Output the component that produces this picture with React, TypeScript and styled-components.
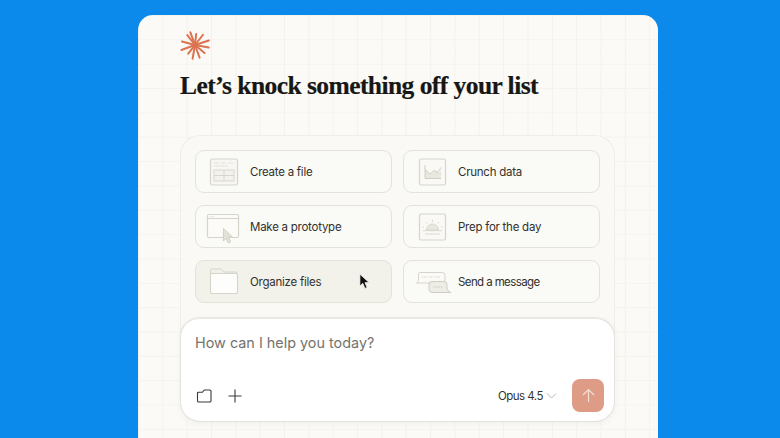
import React from 'react'
import styled, { createGlobalStyle } from 'styled-components'

const GlobalStyle = createGlobalStyle`
  html, body {
    margin: 0;
    height: 100%;
    overflow: hidden;
    background: #0b8aeb;
    font-family: Inter, "Liberation Sans", sans-serif;
  }
`

const Page = styled.div`
  width: 780px;
  height: 438px;
  padding: 15px 0 0 138px;
  box-sizing: border-box;
  overflow: hidden;
`

const Sheet = styled.main`
  width: 520px;
  height: 423px;
  box-sizing: border-box;
  padding: 14px 43px 0 42px;
  border-radius: 15px 15px 0 0;
  background-color: #fbfaf6;
  background-image:
    linear-gradient(to right, #f3f2ec 1px, transparent 1px),
    linear-gradient(to bottom, #f4f3ed 1px, transparent 1px);
  background-size: 24.35px 24.35px;
  background-position: 0 0;
`

const Logo = styled.svg`
  display: block;
  width: 32px;
  height: 32px;
  margin-left: -1px;
`

const Heading = styled.h1`
  margin: 10px 0 0;
  font-family: "Liberation Serif", serif;
  font-size: 25.5px;
  line-height: 30px;
  font-weight: 700;
  letter-spacing: -0.56px;
  color: #171715;
  white-space: nowrap;
  -webkit-text-stroke: 0.2px #171715;
`

const Options = styled.section`
  margin-top: 34px;
  padding: 14px 14px 34px;
  display: grid;
  grid-template-columns: 197px 197px;
  justify-content: space-between;
  gap: 12px 0;
  background: #faf9f5;
  border: 1px solid #efeee8;
  border-bottom: 0;
  border-radius: 20px 20px 0 0;
`

const Option = styled.button<{ $active?: boolean; $tight?: boolean }>`
  position: relative;
  height: 43px;
  padding: 0 0 0 9px;
  display: flex;
  align-items: center;
  gap: 5px;
  font-family: Inter, "Liberation Sans", sans-serif;
  font-size: 11.5px;
  letter-spacing: ${p => (p.$tight ? '-0.6px' : '-0.25px')};
  color: #31312e;
  background: ${p => (p.$active ? '#f3f2ea' : '#fafaf6')};
  border: 1px solid #e4e2da;
  border-radius: 9px;
  box-sizing: border-box;
`

const OptionIcon = styled.svg`
  width: 40px;
  height: 40px;
  flex: none;
`

const Pointer = styled.svg`
  position: absolute;
  left: 163px;
  top: 12px;
  width: 11px;
  height: 17px;
`

const Composer = styled.section`
  height: 105px;
  margin-top: -20px;
  position: relative;
  box-sizing: border-box;
  padding: 14px 10px 9px 14px;
  display: flex;
  flex-direction: column;
  justify-content: space-between;
  background: #fff;
  border: 1px solid #e3e2dd;
  border-top: 2px solid #e9e8e3;
  border-radius: 20px;
  box-shadow: 0 2px 6px rgba(60, 50, 30, 0.05);
`

const Placeholder = styled.div`
  font-size: 14.4px;
  line-height: 20px;
  color: #74736e;
`

const Toolbar = styled.div`
  display: flex;
  align-items: center;
`

const ToolIcon = styled.svg`
  width: 18px;
  height: 18px;
  flex: none;
`

const AddIcon = styled(ToolIcon)`
  margin-left: 13px;
`

const ModelPicker = styled.div`
  margin-left: auto;
  display: flex;
  align-items: center;
  gap: 3px;
  font-size: 11.5px;
  letter-spacing: -0.5px;
  color: #34342f;
`

const Chevron = styled.svg`
  width: 11px;
  height: 11px;
`

const SendButton = styled.button`
  width: 32px;
  height: 33px;
  margin-left: 15px;
  padding: 0;
  display: flex;
  align-items: center;
  justify-content: center;
  background: #de9c87;
  border: 0;
  border-radius: 8px;
`

const SendIcon = styled.svg`
  width: 15px;
  height: 15px;
`

const rays = [
  [-20, 13.5], [6, 11], [38, 13], [72, 14.5], [100, 14], [130, 12.5],
  [160, 13.5], [190, 14], [218, 11], [250, 14.5], [285, 13.5], [322, 12.5],
]

const Spark = () => (
  <Logo viewBox="0 0 32 32">
    {rays.map(([angle, len]) => {
      const r = (angle * Math.PI) / 180
      return (
        <line
          key={angle}
          x1="16"
          y1="16"
          x2={16 + Math.sin(r) * len}
          y2={16 - Math.cos(r) * len}
          stroke="#db7350"
          strokeWidth="2"
          strokeLinecap="round"
        />
      )
    })}
  </Logo>
)

const line = '#d6d4cb'
const fillSoft = '#e9e8df'

const FileIcon = () => (
  <OptionIcon viewBox="0 0 40 40" fill="none">
    <rect x="5.5" y="7" width="27" height="26" rx="1.5" fill="#f8f7f3" stroke={line} strokeWidth="1.2" />
    <path d="M9 11h5M16 11h5M23 11h5M9 14h14" stroke={line} strokeWidth=".8" strokeDasharray="1.5 .6" />
    <rect x="9" y="18" width="20" height="11" fill="#f3f2ec" stroke={line} strokeWidth=".9" />
    <path d="M9 23.5h20M19 18v11" stroke={line} strokeWidth=".9" />
  </OptionIcon>
)

const PrototypeIcon = () => (
  <OptionIcon viewBox="0 0 40 40" fill="none">
    <rect x="2.5" y="7.5" width="31" height="23" rx="1.5" fill="#fcfbf8" stroke={line} strokeWidth="1.2" />
    <path d="M3 11.5h30" stroke={line} strokeWidth="1" />
    <path d="M5 9.6h5" stroke={line} strokeWidth=".7" strokeDasharray="1 .6" />
    <path d="M18.5 21.5l9 8.5-4 .3 2.2 4.6-2.4 1.2-2.2-4.7-2.7 2.7z" fill="#e3e1d8" stroke="#cfcdc4" strokeWidth=".9" strokeLinejoin="round" />
  </OptionIcon>
)

const FolderIcon = () => (
  <OptionIcon viewBox="0 0 40 40" fill="none">
    <path d="M5.5 12V8.2c0-.7.5-1.2 1.2-1.2h9c.5 0 .9.2 1.2.6l1.600 2.400h12.300c.8 0 1.200.5 1.200 1.200V12" fill="#f1f0e9" stroke={line} strokeWidth="1" />
    <rect x="5.5" y="11.5" width="27" height="20" rx="1.5" fill="#fdfdfb" stroke={line} strokeWidth="1.1" />
  </OptionIcon>
)

const DataIcon = () => (
  <OptionIcon viewBox="0 0 40 40" fill="none">
    <rect x="6.5" y="7" width="26" height="26" rx="1.5" fill="#faf9f5" stroke={line} strokeWidth="1.2" />
    <path d="M12 17l5 5 5-3 5 1 1-6v13H12z" fill={fillSoft} />
    <path d="M12 13v13.5h16M12 17.5l5 4.5 4-3.5 3.5 2 3.5-5" stroke="#cdcbc1" strokeWidth=".9" />
  </OptionIcon>
)

const DayIcon = () => (
  <OptionIcon viewBox="0 0 40 40" fill="none">
    <rect x="6.5" y="7" width="26" height="26" rx="1.5" fill="#faf9f5" stroke={line} strokeWidth="1.2" />
    <path d="M13.5 23a6 6 0 0 1 12 0z" fill={fillSoft} stroke="#d4d2c8" strokeWidth=".8" />
    <path d="M10 23.700h19M12 27h15" stroke={line} strokeWidth=".9" />
    <path d="M19.500 12.500v2.500M13 15l1.500 1.500M26 15l-1.500 1.500M9.500 20H11M28 20h1.500" stroke={line} strokeWidth=".8" />
  </OptionIcon>
)

const MessageIcon = () => (
  <OptionIcon viewBox="0 0 40 40" fill="none">
    <path d="M7 10.500h22a3 3 0 0 1 3 3V18a3 3 0 0 1-3 3H3.500c1.400-.8 2-1.800 2-3v-6c0-.800.600-1.500 1.500-1.500z" fill="#fbfaf7" stroke={line} strokeWidth="1" />
    <path d="M9 15h5M15.500 15h5M22 15h5" stroke={line} strokeWidth=".9" strokeDasharray="1.500 .5" />
    <path d="M19 19.500h12a3 3 0 0 1 3 3v3.500c0 1.800 1.600 3.500 4 4.500H19a3 3 0 0 1-3-3v-5a3 3 0 0 1 3-3z" fill="#eeede5" stroke="#cfcdc4" strokeWidth="1" />
    <path d="M20 25h10" stroke="#cfcdc4" strokeWidth=".9" strokeDasharray="1.500 .5" />
  </OptionIcon>
)

export default function App() {
  return (
    <Page>
      <GlobalStyle />
      <Sheet>
        <Spark />
        <Heading>Let’s knock something off your list</Heading>
        <Options>
          <Option><FileIcon />Create a file</Option>
          <Option><DataIcon />Crunch data</Option>
          <Option><PrototypeIcon />Make a prototype</Option>
          <Option><DayIcon />Prep for the day</Option>
          <Option $active>
            <FolderIcon />Organize files
            <Pointer viewBox="0 0 12 18">
              <path d="M1 1v13l3.200-3 2.300 5.500 2.300-1-2.300-5.300H11z" fill="#111" stroke="#f5f5f0" strokeWidth=".8" />
            </Pointer>
          </Option>
          <Option $tight><MessageIcon />Send a message</Option>
        </Options>
        <Composer>
          <Placeholder>How can I help you today?</Placeholder>
          <Toolbar>
            <ToolIcon viewBox="0 0 18 18" fill="none" stroke="#3a3a36" strokeWidth="1.1" strokeLinejoin="round">
              <path d="M2.500 5.500v8.200c0 .7.500 1.300 1.200 1.300h11c.7 0 1.300-.6 1.300-1.300V4c0-.7-.6-1-1.300-1H9.300L7.500 5.200H3.300c-.5 0-.8 0-.8.300z" />
            </ToolIcon>
            <AddIcon viewBox="0 0 18 18" fill="none" stroke="#3a3a36" strokeWidth="1.1">
              <path d="M9 2.500v13M2.500 9h13" />
            </AddIcon>
            <ModelPicker>
              Opus 4.5
              <Chevron viewBox="0 0 11 11" fill="none" stroke="#b9b8b2" strokeWidth="1">
                <path d="M1 3.500l4.500 4.500L10 3.500" />
              </Chevron>
            </ModelPicker>
            <SendButton>
              <SendIcon viewBox="0 0 15 15" fill="none" stroke="#f5dfd6" strokeWidth="1.2">
                <path d="M7.500 14V1.500M2 7l5.500-5.500L13 7" />
              </SendIcon>
            </SendButton>
          </Toolbar>
        </Composer>
      </Sheet>
    </Page>
  )
}
